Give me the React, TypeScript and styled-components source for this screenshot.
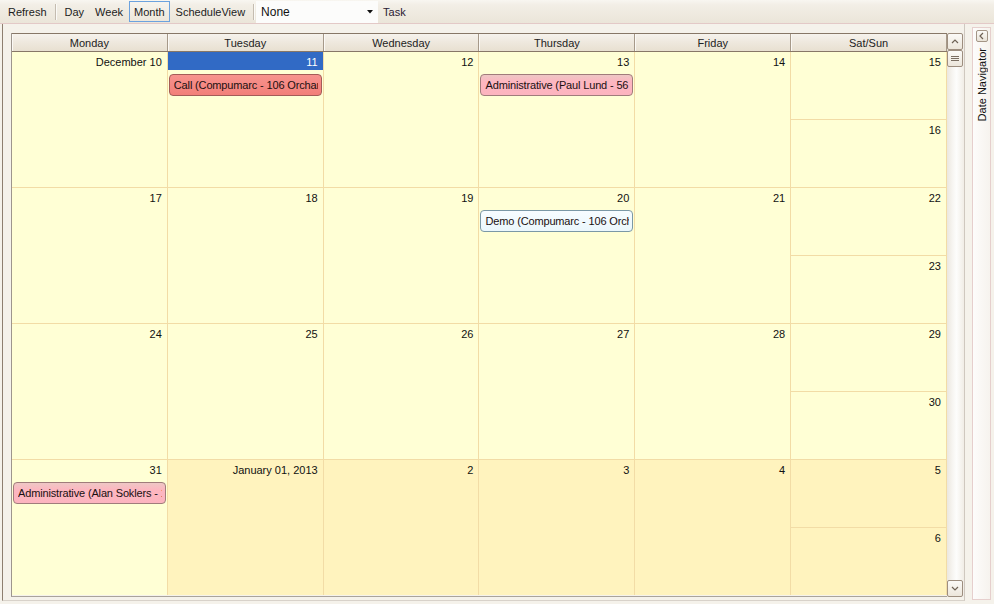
import React from "react";
import styled, { createGlobalStyle, css } from "styled-components";

const GlobalStyle = createGlobalStyle`
  html, body { margin: 0; padding: 0; }
  body {
    background: #f5f2eb;
    font-family: "Liberation Sans", Arial, sans-serif;
    font-size: 11px;
    color: #1a1a1a;
  }
  #root { width: 994px; height: 604px; overflow: hidden; }
`;

const Page = styled.div`
  width: 994px;
  height: 604px;
  display: flex;
  flex-direction: column;
  background: #f5f2eb;
`;

const Toolbar = styled.div`
  height: 24px;
  box-sizing: border-box;
  display: flex;
  align-items: flex-start;
  padding: 1px 0 0 3px;
  background: linear-gradient(#f8f6f1 0, #f2eee6 5px, #ebe5d9 100%);
  border-bottom: 1px solid #e3c9c7;
`;

const ToolButton = styled.div<{ $active?: boolean; $muted?: boolean; $padLeft?: number }>`
  height: 21px;
  box-sizing: border-box;
  display: flex;
  align-items: center;
  padding: 0 4px 0 ${(p) => p.$padLeft ?? 4}px;
  border: 1px solid transparent;
  font-size: 11px;
  color: ${(p) => (p.$muted ? "#2a2033" : "#1c1c1c")};
  white-space: nowrap;
  ${(p) =>
    p.$active &&
    css`
      margin: 0 1px 0 1px;
      border-color: #6ca2de;
      background: linear-gradient(#f7f4ee, #ede7db);
    `}
`;

const Separator = styled.div<{ $gapRight?: number }>`
  width: 1px;
  height: 16px;
  margin: 3px ${(p) => p.$gapRight ?? 4}px 0 3px;
  background: #c4bcb0;
  box-shadow: 1px 0 0 #fbfaf7;
`;

const Combo = styled.div`
  width: 122px;
  height: 22px;
  box-sizing: border-box;
  display: flex;
  align-items: center;
  justify-content: space-between;
  padding: 0 5px 0 5px;
  background: #fcfcfb;
  font-size: 12px;
  color: #111;
`;

const Main = styled.div`
  flex: 1;
  display: flex;
  align-items: stretch;
  min-height: 0;
`;

const SchedulerPanel = styled.div`
  margin-left: 2px;
  width: 963px;
  box-sizing: border-box;
  border-left: 1px solid #8e7f70;
  border-right: 1px solid #cfc8bf;
  border-bottom: 1px solid #d8d2ca;
  padding: 9px 0 3px 8px;
  display: flex;
  align-items: stretch;
  height: 577px;
`;

const Frame = styled.div`
  width: 936px;
  flex: none;
  box-sizing: border-box;
  border-left: 1px solid #9d958d;
  border-bottom: 1px solid #a9a39c;
  display: flex;
  flex-direction: column;
`;

const HeaderRow = styled.div`
  height: 19px;
  box-sizing: border-box;
  display: grid;
  grid-template-columns: repeat(6, 1fr);
  border-top: 1px solid #877767;
  border-bottom: 1px solid #877767;
  background: linear-gradient(#f6f3ed 0, #efe9df 45%, #e8e0d1 100%);
`;

const HeaderCell = styled.div`
  display: flex;
  align-items: center;
  justify-content: center;
  border-right: 1px solid #a69989;
  box-shadow: inset 1px 0 0 #fbf9f5;
  font-size: 11px;
  color: #222;
`;

const WeekRow = styled.div`
  height: 136px;
  box-sizing: border-box;
  display: grid;
  grid-template-columns: repeat(6, 1fr);
  border-bottom: 1px solid #f2dca6;
  &:last-child {
    border-bottom: none;
    height: 135px;
  }
`;

const DayCell = styled.div<{ $next?: boolean }>`
  min-width: 0;
  display: flex;
  flex-direction: column;
  background: ${(p) => (p.$next ? "#fff3be" : "#ffffd5")};
  border-right: 1px solid #f2dca6;
  overflow: hidden;
`;

const WeekendCell = styled.div`
  min-width: 0;
  display: flex;
  flex-direction: column;
  border-right: 1px solid #f2dca6;
`;

const HalfDay = styled.div<{ $next?: boolean }>`
  flex: 1;
  min-height: 0;
  display: flex;
  flex-direction: column;
  background: ${(p) => (p.$next ? "#fff3be" : "#ffffd5")};
  &:first-child {
    border-bottom: 1px solid #f2dca6;
  }
`;

const DayLabel = styled.div<{ $today?: boolean }>`
  height: 18px;
  box-sizing: border-box;
  padding-top: 1px;
  line-height: 18px;
  flex: none;
  text-align: right;
  padding-right: 5px;
  font-size: 11px;
  color: #111;
  ${(p) =>
    p.$today &&
    css`
      background: #316ac5;
      color: #fff;
    `}
`;

const eventColors = {
  call: { bg: "linear-gradient(#f7938e, #f27f79)", border: "#a45c58" },
  admin: { bg: "linear-gradient(#eec7c5, #fdb6c0 35%, #fcb4bf)", border: "#a07c7b" },
  demo: { bg: "linear-gradient(#f7fcff, #ebf7fc)", border: "#7b98a6" },
};

type Kind = keyof typeof eventColors;

const EventBox = styled.div<{ $kind: Kind }>`
  margin: 4px 1px 0 1px;
  height: 22px;
  box-sizing: border-box;
  border-radius: 4px;
  border: 1px solid ${(p) => eventColors[p.$kind].border};
  background: ${(p) => eventColors[p.$kind].bg};
  padding: 0 3px 0 4px;
  display: flex;
  align-items: center;
`;

const EventText = styled.span`
  display: block;
  overflow: hidden;
  white-space: nowrap;
  font-size: 11px;
  letter-spacing: -0.15px;
  color: #1a1010;
`;

const ScrollBar = styled.div`
  width: 17px;
  flex: none;
  display: flex;
  flex-direction: column;
  align-items: flex-start;
  background: linear-gradient(to right, #ebe7df 0, #f6f4f0 30%, #fdfdfc 55%, #f1ede6 100%);
  height: 564px;
`;

const ScrollButton = styled.div`
  width: 16px;
  height: 17px;
  box-sizing: border-box;
  border: 1px solid #9d8e7f;
  border-radius: 2px;
  background: linear-gradient(#fbfaf7, #ece6db);
  display: flex;
  align-items: center;
  justify-content: center;
  color: #6f6356;
`;

const ScrollSpacer = styled.div`
  flex: 1;
`;

const DockBar = styled.div`
  margin: 3px 0 4px 7px;
  width: 19px;
  box-sizing: border-box;
  border: 1px solid #e6cfcd;
  background: linear-gradient(to right, #fdfcfb, #f6f3ee);
  display: flex;
  flex-direction: column;
  align-items: center;
  padding-top: 2px;
`;

const DockButton = styled.div`
  width: 12px;
  height: 12px;
  box-sizing: border-box;
  border: 1px solid #a39586;
  border-radius: 2px;
  background: linear-gradient(#fbfaf7, #e9e3d8);
  display: flex;
  align-items: center;
  justify-content: center;
  color: #6d6154;
`;

const DockTitle = styled.div`
  margin-top: 6px;
  writing-mode: vertical-rl;
  transform: rotate(180deg);
  font-size: 11px;
  color: #111;
  white-space: nowrap;
`;

const Chevron = ({ dir }: { dir: "up" | "down" | "left" }) => {
  const pts =
    dir === "up" ? "1,5 4,2 7,5" : dir === "down" ? "1,2 4,5 7,2" : "5,1 2,4 5,7";
  const w = dir === "left" ? 7 : 8;
  const h = dir === "left" ? 8 : 7;
  return (
    <svg width={w} height={h} viewBox={`0 0 ${w} ${h}`}>
      <polyline points={pts} fill="none" stroke="currentColor" strokeWidth="1.2" />
    </svg>
  );
};

const Grip = () => (
  <svg width="8" height="7" viewBox="0 0 8 7">
    <path d="M0 1.5H8M0 3.5H8M0 5.5H8" stroke="#7a6e62" strokeWidth="1" />
  </svg>
);

const ComboArrow = () => (
  <svg width="6" height="4" viewBox="0 0 6 4">
    <polygon points="0,0 6,0 3,3.5" fill="#111" />
  </svg>
);

type Ev = { kind: Kind; text: string };
type Day = { label: string; today?: boolean; next?: boolean; events?: Ev[] };
type Week = { days: Day[]; weekend: [Day, Day] };

const weeks: Week[] = [
  {
    days: [
      { label: "December 10" },
      {
        label: "11",
        today: true,
        events: [{ kind: "call", text: "Call (Compumarc - 106 Orchard Street)" }],
      },
      { label: "12" },
      {
        label: "13",
        events: [{ kind: "admin", text: "Administrative (Paul Lund - 56 Main Street)" }],
      },
      { label: "14" },
    ],
    weekend: [{ label: "15" }, { label: "16" }],
  },
  {
    days: [
      { label: "17" },
      { label: "18" },
      { label: "19" },
      {
        label: "20",
        events: [{ kind: "demo", text: "Demo (Compumarc - 106 Orchard Street)" }],
      },
      { label: "21" },
    ],
    weekend: [{ label: "22" }, { label: "23" }],
  },
  {
    days: [{ label: "24" }, { label: "25" }, { label: "26" }, { label: "27" }, { label: "28" }],
    weekend: [{ label: "29" }, { label: "30" }],
  },
  {
    days: [
      {
        label: "31",
        events: [{ kind: "admin", text: "Administrative (Alan Soklers - 12 Elm Road)" }],
      },
      { label: "January 01, 2013", next: true },
      { label: "2", next: true },
      { label: "3", next: true },
      { label: "4", next: true },
    ],
    weekend: [
      { label: "5", next: true },
      { label: "6", next: true },
    ],
  },
];

const headers = ["Monday", "Tuesday", "Wednesday", "Thursday", "Friday", "Sat/Sun"];

const Events = ({ events }: { events?: Ev[] }) => (
  <>
    {(events || []).map((e, i) => (
      <EventBox key={i} $kind={e.kind}>
        <EventText>{e.text}</EventText>
      </EventBox>
    ))}
  </>
);

export default function App() {
  return (
    <Page>
      <GlobalStyle />
      <Toolbar>
        <ToolButton>Refresh</ToolButton>
        <Separator />
        <ToolButton>Day</ToolButton>
        <ToolButton $padLeft={5}>Week</ToolButton>
        <ToolButton $active>Month</ToolButton>
        <ToolButton>ScheduleView</ToolButton>
        <Separator $gapRight={2} />
        <Combo>
          <span>None</span>
          <ComboArrow />
        </Combo>
        <ToolButton $muted>Task</ToolButton>
      </Toolbar>
      <Main>
        <SchedulerPanel>
          <Frame>
            <HeaderRow>
              {headers.map((h) => (
                <HeaderCell key={h}>{h}</HeaderCell>
              ))}
            </HeaderRow>
            {weeks.map((w, wi) => (
              <WeekRow key={wi}>
                {w.days.map((d, di) => (
                  <DayCell key={di} $next={d.next}>
                    <DayLabel $today={d.today}>{d.label}</DayLabel>
                    <Events events={d.events} />
                  </DayCell>
                ))}
                <WeekendCell>
                  {w.weekend.map((d, di) => (
                    <HalfDay key={di} $next={d.next}>
                      <DayLabel>{d.label}</DayLabel>
                    </HalfDay>
                  ))}
                </WeekendCell>
              </WeekRow>
            ))}
          </Frame>
          <ScrollBar>
            <ScrollButton>
              <Chevron dir="up" />
            </ScrollButton>
            <ScrollButton>
              <Grip />
            </ScrollButton>
            <ScrollSpacer />
            <ScrollButton>
              <Chevron dir="down" />
            </ScrollButton>
          </ScrollBar>
        </SchedulerPanel>
        <DockBar>
          <DockButton>
            <Chevron dir="left" />
          </DockButton>
          <DockTitle>Date Navigator</DockTitle>
        </DockBar>
      </Main>
    </Page>
  );
}
